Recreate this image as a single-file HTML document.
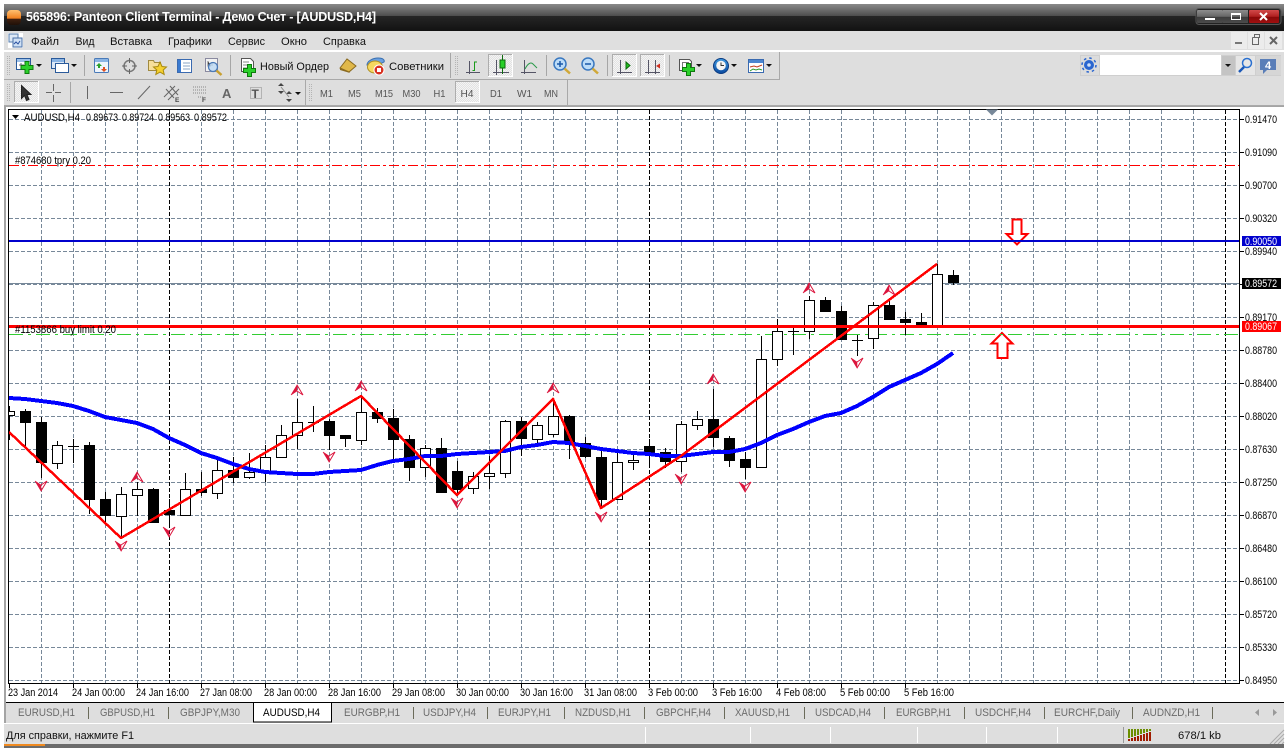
<!DOCTYPE html>
<html><head><meta charset="utf-8"><title>Panteon Client Terminal</title>
<style>
html,body{margin:0;padding:0;background:#fff;width:1288px;height:748px;overflow:hidden}
svg{display:block;position:absolute;left:0;top:0}
text{font-family:"Liberation Sans","Noto Sans CJK SC",sans-serif;font-size:11px;fill:#111}
.p text{font-size:11px;fill:#000}
.t text{font-size:11px;fill:#6b6b6b}
.m text{font-size:10.5px;fill:#555}
</style></head><body>
<svg width="1288" height="748" viewBox="0 0 1288 748" xmlns="http://www.w3.org/2000/svg">
<defs>
<linearGradient id="tb" x1="0" y1="0" x2="0" y2="1"><stop offset="0" stop-color="#8a8a8a"/><stop offset="1" stop-color="#4d4d4d"/></linearGradient>
<linearGradient id="tb2" x1="0" y1="0" x2="0" y2="1"><stop offset="0" stop-color="#262626"/><stop offset="1" stop-color="#121212"/></linearGradient>
<linearGradient id="btn" x1="0" y1="0" x2="0" y2="1"><stop offset="0" stop-color="#8d8d8d"/><stop offset=".5" stop-color="#666"/><stop offset=".55" stop-color="#3c3c3c"/><stop offset="1" stop-color="#4c4c4c"/></linearGradient>
<linearGradient id="cls" x1="0" y1="0" x2="0" y2="1"><stop offset="0" stop-color="#d24a4a"/><stop offset=".5" stop-color="#b02020"/><stop offset=".55" stop-color="#880808"/><stop offset="1" stop-color="#a01010"/></linearGradient>
<linearGradient id="org" x1="0" y1="0" x2="0" y2="1"><stop offset="0" stop-color="#ffc070"/><stop offset=".55" stop-color="#f08020"/><stop offset=".6" stop-color="#402010"/><stop offset="1" stop-color="#201008"/></linearGradient>
<linearGradient id="clk" x1="0" y1="0" x2="0" y2="1"><stop offset="0" stop-color="#3f9ae0"/><stop offset="1" stop-color="#0a4aa0"/></linearGradient>
<pattern id="chk" width="2" height="2" patternUnits="userSpaceOnUse"><rect width="2" height="2" fill="#e2e2e2"/><rect width="1" height="1" fill="#f4f4f4"/><rect x="1" y="1" width="1" height="1" fill="#f4f4f4"/></pattern>
<clipPath id="ch"><rect x="9" y="110" width="1230" height="573"/></clipPath>
<path id="u" d="M0-5L-6 5L0 1Z" fill="#dc143c" stroke="#dc143c" stroke-width=".6"/>
<path id="d" d="M0 5L-6-5L0-1Z" fill="#dc143c" stroke="#dc143c" stroke-width=".6"/>
<path id="u2" d="M0-5L6 5L0 1" fill="none" stroke="#dc143c"/>
<path id="d2" d="M0 5L6-5L0-1" fill="none" stroke="#dc143c"/>
<path id="ar" d="M0 0h6l-3 3z" fill="#111"/>
</defs>

<!-- window body -->
<rect x="4" y="4" width="1280" height="744" fill="#dedede"/>
<!-- title bar -->
<rect x="4" y="4" width="1280" height="12" fill="url(#tb)"/>
<rect x="4" y="16" width="1280" height="15" fill="url(#tb2)"/>
<rect x="7" y="10" width="14" height="15" rx="4" fill="url(#org)"/>
<text x="26" y="21" style="font-size:12.5px;font-weight:bold;fill:#fff" textLength="350" lengthAdjust="spacing">565896: Panteon Client Terminal - Демо Счет - [AUDUSD,H4]</text>
<rect x="1196" y="8.500" width="85" height="16" rx="3" fill="#222" stroke="#555"/>
<rect x="1197" y="10" width="26" height="13" rx="1" fill="url(#btn)"/>
<rect x="1223" y="10" width="25" height="13" fill="url(#btn)"/>
<rect x="1249" y="10" width="30" height="13" rx="1" fill="url(#cls)"/>
<rect x="1205" y="18" width="10" height="2" fill="#fff"/>
<rect x="1231.500" y="13.500" width="9" height="6" fill="none" stroke="#fff"/><rect x="1231" y="13" width="10" height="2" fill="#fff"/>
<path d="M1260 13l7 7M1267 13l-7 7" stroke="#fff" stroke-width="2"/>

<!-- menu -->
<rect x="4" y="31" width="1280" height="19" fill="#dfdfdf"/>
<rect x="8" y="33" width="15" height="15" fill="#fff"/>
<rect x="9" y="34" width="9" height="8" fill="#dce8f6" stroke="#5a80b0"/><rect x="13" y="38" width="9" height="9" fill="#cfe0f4" stroke="#4a70a8"/>
<path d="M14 44l2-2 2 2 2-3" stroke="#2a50a0" fill="none"/>
<g>
<text x="31" y="45" textLength="28" lengthAdjust="spacingAndGlyphs">Файл</text>
<text x="75.500" y="45" textLength="19" lengthAdjust="spacingAndGlyphs">Вид</text>
<text x="110" y="45" textLength="42" lengthAdjust="spacingAndGlyphs">Вставка</text>
<text x="168" y="45" textLength="44" lengthAdjust="spacingAndGlyphs">Графики</text>
<text x="228" y="45" textLength="37" lengthAdjust="spacingAndGlyphs">Сервис</text>
<text x="281" y="45" textLength="26" lengthAdjust="spacingAndGlyphs">Окно</text>
<text x="323" y="45" textLength="43" lengthAdjust="spacingAndGlyphs">Справка</text>
</g>
<rect x="1231" y="32" width="16" height="17" fill="#ececec"/><rect x="1248" y="32" width="16" height="17" fill="#ececec"/><rect x="1265" y="32" width="17" height="17" fill="#ececec"/>
<rect x="1235" y="42" width="7" height="2" fill="#777"/>
<path d="M1252.500 37.500h7v-3h-5v3M1252.500 37.500v7h6v-7" fill="none" stroke="#666"/>
<path d="M1270 37l7 7M1277 37l-7 7" stroke="#666" stroke-width="2"/>
<rect x="4" y="50" width="1280" height="2" fill="#fff"/>

<!-- toolbars frames -->
<path d="M4 79.500H779.500V52M4 105.500H1284M567.500 80V105M305.500 80V105" stroke="#a9a9a9" fill="none" shape-rendering="crispEdges"/>
<path d="M7.500 56V75M9.500 56V75M7.500 84V102M9.500 84V102M309.500 84V102M311.500 84V102M455.500 56V75M457.500 56V75" stroke="#b4b4b4" stroke-dasharray="1 1" shape-rendering="crispEdges"/>
<path d="M84.500 55V76M230.500 55V76M450.500 53V78M546.500 55V76M607.500 55V76M669.500 55V76M70.500 82V103" stroke="#a6a6a6" shape-rendering="crispEdges"/>

<!-- active buttons -->
<g shape-rendering="crispEdges">
<rect x="488" y="54" width="25" height="23" fill="url(#chk)"/><rect x="612" y="54" width="25" height="23" fill="url(#chk)"/><rect x="640" y="54" width="25" height="23" fill="url(#chk)"/>
<rect x="14" y="81" width="25" height="22" fill="url(#chk)"/><rect x="455" y="81" width="25" height="22" fill="url(#chk)"/>
<path fill="none" stroke="#adadad" d="M488.500 76V54.500H512M612.500 76V54.500H636M640.500 76V54.500H664M14.500 102V81.500H38M455.500 102V81.500H479"/>
<path fill="none" stroke="#fff" d="M488.500 76.500H512.500V54M612.500 76.500H636.500V54M640.500 76.500H664.500V54M14.500 102.500H38.500V81M455.500 102.500H479.500V81"/>
</g>

<!-- toolbar 1 icons -->
<g stroke-width="1">
<rect x="16.500" y="58.500" width="14" height="11" fill="#fff" stroke="#2a5a9a"/><rect x="17" y="59" width="13" height="3" fill="#9cc0e8"/>
<path d="M19 65h5M21 63v5" stroke="#667"/>
<path d="M25 61.500h4v4h4v4h-4v4h-4v-4h-4v-4h4z" fill="#2bd02b" stroke="#0d7a0d"/>
<use href="#ar" x="36" y="64"/>
<rect x="51.500" y="58.500" width="13" height="10" fill="#dce8f6" stroke="#2a5a9a"/><rect x="55.500" y="63.500" width="13" height="9" fill="#fff" stroke="#2a5a9a"/><rect x="52" y="59" width="12" height="3" fill="#8ab4e4"/>
<use href="#ar" x="71" y="64"/>
<rect x="94.500" y="58.500" width="14" height="14" rx="1" fill="#eef4fb" stroke="#4a7ab8"/><rect x="95" y="59" width="13" height="3" fill="#8ab4e4"/>
<path d="M99 63l3 3h-2v2h-2v-2h-2z" fill="#2aa02a"/><path d="M104 72l-3-3h2v-2h2v2h2z" fill="#e05020"/>
<circle cx="129.500" cy="66" r="5.500" fill="none" stroke="#777" stroke-width="1.500"/><path d="M129.500 58v5M129.500 69v5M122 66h5M132 66h5" stroke="#666"/>
<path d="M148.500 60.500h5l1 2h6v8h-12z" fill="#f6df9a" stroke="#a08a40"/>
<path d="M160 62l2 4.500 4.500.5-3.300 3 1 4.500-4.200-2.400-4.200 2.400 1-4.500-3.300-3 4.500-.5z" fill="#f5d030" stroke="#a88a10"/>
<rect x="177.500" y="59.500" width="14" height="13" fill="#fff" stroke="#3a6ab0"/><rect x="178" y="60" width="3" height="12" fill="#3a7ad0"/><path d="M183 63h7M183 66h7M183 69h7" stroke="#8aa4c4"/>
<rect x="205.500" y="58.500" width="12" height="13" fill="#f2f2f2" stroke="#8a8aa0"/><path d="M208 61v5h3M212 62v4" stroke="#777"/>
<circle cx="213" cy="67" r="4.500" fill="#bcd8f4" fill-opacity=".8" stroke="#4a7ab8" stroke-width="1.300"/><path d="M216.500 70.500l5 4.500" stroke="#c8a030" stroke-width="2.500"/>
<path d="M241.500 58.500h9l3 3v10h-12z" fill="#fff" stroke="#555"/><path d="M243 62h6M243 65h8M243 68h4" stroke="#888"/>
<path d="M247.500 64.500h4v4h4v4h-4v4h-4v-4h-4v-4h4z" fill="#2bd02b" stroke="#0d7a0d"/>
<text x="260" y="70" textLength="69" lengthAdjust="spacingAndGlyphs" style="fill:#111">Новый Ордер</text>
<path d="M340 68l7-9 9 7-7 6z" fill="#e0b84a" stroke="#8a6a20"/><path d="M340 68l9 4 1 1-10-3z" fill="#8a6a20"/>
<path d="M367 65c0-4 6-7 11-7s7 2 6 4l-6 3z" fill="#6aa0e0" stroke="#3a70b0"/>
<ellipse cx="375" cy="67" rx="7.500" ry="6" fill="#f6d860" stroke="#b09020"/>
<circle cx="379" cy="70" r="5" fill="#d83020" stroke="#fff"/><rect x="377" y="68" width="4" height="4" fill="#fff"/>
<text x="389" y="70" textLength="55" lengthAdjust="spacingAndGlyphs">Советники</text>
<g fill="none" stroke="#556" shape-rendering="crispEdges">
<path d="M469.500 61v13M466 72.500h14"/>
<path d="M472.500 70.500h2V62h2.500" stroke="#1a9a1a"/>
<path d="M496.500 60v15M493 72.500h16"/>
<path d="M524.500 60v14M521 72.500h15"/>
<path d="M620.500 60v14M617 72.500h15"/>
<path d="M648.500 60v14M655.500 60v14M645 72.500h15"/>
</g>
<path d="M525 69c3-6 6-7 8-5l4 4" stroke="#2a9a4a" fill="none"/>
<path d="M502.500 55v19" stroke="#0d6a0d" shape-rendering="crispEdges"/><rect x="500" y="60" width="5" height="8" fill="#28d028" stroke="#0d6a0d"/>
<path d="M626 62l4 3.500-4 3.500z" fill="#20c020" stroke="#0d6a0d"/>
<path d="M660 63.500l-4 2.500 4 2.500z" fill="#d03020"/>
<circle cx="560" cy="64" r="6" fill="#bcdcf8" stroke="#3a78c0" stroke-width="1.500"/><path d="M557 64h6M560 61v6" stroke="#1a58a8" stroke-width="1.500"/><path d="M564.500 68.500l5.500 5" stroke="#d0a838" stroke-width="2.500"/>
<circle cx="588" cy="64" r="6" fill="#bcdcf8" stroke="#3a78c0" stroke-width="1.500"/><path d="M585 64h6" stroke="#1a58a8" stroke-width="1.500"/><path d="M592.500 68.500l5.500 5" stroke="#d0a838" stroke-width="2.500"/>
<path d="M679.500 59.500h10l2 2v9h-12z" fill="#fff" stroke="#555"/><path d="M682.500 62.500h6v7h-6z" fill="#fff" stroke="#777"/>
<path d="M686.500 63.500h4v4h4v4h-4v4h-4v-4h-4v-4h4z" fill="#2bd02b" stroke="#0d7a0d"/>
<use href="#ar" x="696" y="64"/>
<circle cx="721" cy="66" r="7.500" fill="url(#clk)" stroke="#0a3a80"/><circle cx="721" cy="65.500" r="4.800" fill="#f4f4f4"/><path d="M721 62.500v3h3" stroke="#333" fill="none"/>
<use href="#ar" x="731" y="64"/>
<rect x="748.500" y="59.500" width="15" height="13" fill="#fff" stroke="#3a6ab0"/><rect x="749" y="60" width="14" height="3" fill="#4a86d0"/>
<path d="M750 67l4-1 3 1 5-2" stroke="#c04020" fill="none"/><path d="M750 71l3-2 3 1 3-1 3 1" stroke="#2a9a2a" fill="none"/>
<use href="#ar" x="766" y="64"/>
</g>

<!-- right toolbar -->
<rect x="1080" y="55" width="201" height="21" fill="#cfcfcf"/>
<rect x="1100" y="55" width="121" height="20" fill="#fff"/>
<rect x="1081" y="56" width="18" height="19" fill="#dcdcdc"/>
<rect x="1222" y="56" width="13" height="19" fill="#c4c4c4"/><rect x="1236" y="56" width="19" height="19" fill="#e6e6e6"/><rect x="1256" y="56" width="25" height="19" fill="#d6d6d6"/>
<circle cx="1089" cy="65" r="5" fill="#2a66d0"/><circle cx="1089" cy="65" r="7" fill="none" stroke="#2a66d0" stroke-width="1.500" stroke-dasharray="2.500 3"/><circle cx="1089" cy="65" r="1.800" fill="#cfe0f8"/>
<use href="#ar" x="1225" y="64"/>
<circle cx="1247" cy="63" r="4.500" fill="none" stroke="#2a70d0" stroke-width="1.500"/><path d="M1244 67l-5 5" stroke="#1a58b8" stroke-width="2.500"/>
<rect x="1260" y="59" width="16" height="11" fill="#5a7eb8"/><path d="M1263 70v4l4-4z" fill="#5a7eb8"/>
<text x="1265" y="69" style="font-size:11px;font-weight:bold;fill:#fff">4</text>

<!-- toolbar 2 -->
<path d="M21.500 85.500v13l3-3 2 5 2.500-1-2-5h4z" fill="#333" stroke="#222"/>
<path d="M53.500 84v7M53.500 95v7M46 92.500h6M55 92.500h6" stroke="#666" shape-rendering="crispEdges"/>
<path d="M87.500 86v13M110 92.500h13" stroke="#666" shape-rendering="crispEdges"/>
<path d="M138 99l12-13" stroke="#666"/>
<path d="M164 97l11-11M168 100l11-11M166 89l8 9M170 86l8 9" stroke="#666" fill="none"/>
<text x="175" y="102" style="font-size:6.500px;font-weight:bold;fill:#444">E</text>
<path d="M193 87h14M193 90h14M193 93h14" stroke="#888" stroke-dasharray="1 1" shape-rendering="crispEdges"/>
<path d="M198 97h6" stroke="#888" stroke-dasharray="1 1"/>
<text x="202" y="102" style="font-size:6.500px;font-weight:bold;fill:#444">F</text>
<text x="222" y="98" style="font-size:13px;font-weight:bold;fill:#666">A</text>
<rect x="250.500" y="87.500" width="11" height="11" fill="none" stroke="#888" stroke-dasharray="1 1"/>
<text x="251.500" y="98" style="font-size:12px;font-weight:bold;fill:#555">T</text>
<path d="M278 87l3-3 3 3zM278 92h6l-3 3zM286 95l3-3 3 3zM286 100h6l-3 3z" transform="translate(0,-1)" fill="#444"/>
<path d="M281 87l8 10" stroke="#888"/>
<use href="#ar" x="295" y="92"/>
<g class="m">
<text x="320" y="97" textLength="13" lengthAdjust="spacingAndGlyphs">M1</text>
<text x="348" y="97" textLength="13" lengthAdjust="spacingAndGlyphs">M5</text>
<text x="375" y="97" textLength="18" lengthAdjust="spacingAndGlyphs">M15</text>
<text x="402.500" y="97" textLength="18" lengthAdjust="spacingAndGlyphs">M30</text>
<text x="433.500" y="97" textLength="12" lengthAdjust="spacingAndGlyphs">H1</text>
<text x="460.500" y="97" textLength="13" lengthAdjust="spacingAndGlyphs">H4</text>
<text x="490" y="97" textLength="12" lengthAdjust="spacingAndGlyphs">D1</text>
<text x="517" y="97" textLength="15" lengthAdjust="spacingAndGlyphs">W1</text>
<text x="544" y="97" textLength="14" lengthAdjust="spacingAndGlyphs">MN</text>
</g>

<!-- chart area -->
<rect x="4" y="106" width="1280" height="597" fill="#fff"/>
<rect x="4" y="106" width="2" height="617" fill="#a4a4a4"/>
<rect x="6" y="106" width="1278" height="1" fill="#a4a4a4"/>
<rect x="8.500" y="109.500" width="1231" height="574" fill="#fff" stroke="#000" shape-rendering="crispEdges"/>
<g clip-path="url(#ch)" shape-rendering="crispEdges">
<path stroke="#778899" stroke-dasharray="4 2" fill="none" d="M41.500 110V683M73.500 110V683M105.500 110V683M137.500 110V683M201.500 110V683M233.500 110V683M265.500 110V683M297.500 110V683M329.500 110V683M361.500 110V683M393.500 110V683M425.500 110V683M457.500 110V683M489.500 110V683M521.500 110V683M553.500 110V683M585.500 110V683M617.500 110V683M681.500 110V683M713.500 110V683M745.500 110V683M777.500 110V683M809.500 110V683M841.500 110V683M873.500 110V683M905.500 110V683M937.500 110V683M969.500 110V683M1001.500 110V683M1033.500 110V683M1065.500 110V683M1097.500 110V683M1129.500 110V683M1161.500 110V683M1193.500 110V683M9 119.500H1239M9 152.500H1239M9 185.500H1239M9 218.500H1239M9 251.500H1239M9 284.500H1239M9 317.500H1239M9 350.500H1239M9 383.500H1239M9 416.500H1239M9 449.500H1239M9 482.500H1239M9 515.500H1239M9 548.500H1239M9 581.500H1239M9 614.500H1239M9 647.500H1239M9 680.500H1239"/>
<path stroke="#000" stroke-dasharray="4 2" d="M169.500 110V683M649.500 110V683M1225.500 110V683"/>
<path stroke="#ff0000" stroke-dasharray="10 3 3 3" d="M9 165.500H1239"/>
<path d="M1012.500 219.500h9v14.500h6l-10.500 10.500-10.500-10.500h6z" fill="#fff" stroke="#ff0000" stroke-width="2" shape-rendering="auto"/>
<path d="M1002 333l10.500 10.500h-5v14.500h-10v-14.500h-6z" fill="#fff" stroke="#ff0000" stroke-width="2" shape-rendering="auto"/>
<path stroke="#778899" d="M9 283.500H1239"/>
<rect x="9" y="240" width="1230" height="2" fill="#0000cd"/>
<path stroke="#32cd32" stroke-dasharray="14 5 3 5" d="M9 334.500H1239"/>
<!-- wicks -->
<path stroke="#000" fill="none" d="M9.500 406V440M25.500 409V447M41.500 417V478M57.500 441V469M73.500 439V463M89.500 442V514M105.500 492V524M121.500 487V537M137.500 482V516M153.500 488V523M169.500 499V527M185.500 473V515M201.500 472V496M217.500 457V499M233.500 457V483M249.500 453V479M265.500 445V482M281.500 425V457M297.500 399V449M313.500 406V432M329.500 419V450M345.500 435V447M361.500 396V445M377.500 408V423M393.500 409V460M409.500 435V481M425.500 445V477M441.500 438V493M457.500 461V495M473.500 472V494M489.500 456V489M505.500 420V478M521.500 417V456M537.500 422V445M553.500 399V437M569.500 415V459M585.500 437V458M601.500 450V508M617.500 453V499M633.500 454V470M649.500 439V466M665.500 448V468M681.500 421V472M697.500 411V430M713.500 389V447M729.500 436V467M745.500 452V479M761.500 336V467M777.500 319V366M793.500 327V355M809.500 296V339M825.500 297V312M841.500 306V340M857.500 335V356M873.500 302V349M889.500 298V320M905.500 312V335M921.500 313V325M937.500 264V325M953.500 270V285M68 446.500H79M308 422.500H319M788 331.500H799M852 340.500H863"/>
<!-- black bodies -->
<path fill="#000" d="M20 411h11v12h-11zM36 422h11v41h-11zM84 445h11v55h-11zM100 499h11v17h-11zM148 489h11v34h-11zM164 510h11v5h-11zM196 489h11v4h-11zM228 470h11v8h-11zM324 421h11v15h-11zM340 435h11v4h-11zM372 412h11v7h-11zM388 418h11v22h-11zM404 439h11v29h-11zM436 448h11v45h-11zM452 471h11v19h-11zM516 421h11v18h-11zM564 416h11v26h-11zM580 443h11v14h-11zM596 457h11v43h-11zM644 446h11v7h-11zM660 452h11v10h-11zM708 419h11v19h-11zM724 438h11v23h-11zM740 459h11v9h-11zM820 300h11v12h-11zM836 311h11v29h-11zM884 305h11v15h-11zM900 319h11v4h-11zM916 322h11v3h-11zM948 275h11v8h-11z"/>
<!-- white bodies -->
<path fill="#fff" stroke="#000" d="M4.500 411.500h10v4h-10zM52.500 445.500h10v18h-10zM116.500 494.500h10v22h-10zM132.500 489.500h10v6h-10zM180.500 489.500h10v26h-10zM212.500 470.500h10v23h-10zM244.500 472.500h10v5h-10zM260.500 457.500h10v15h-10zM276.500 435.500h10v22h-10zM292.500 422.500h10v13h-10zM356.500 412.500h10v28h-10zM420.500 448.500h10v19h-10zM468.500 476.500h10v12h-10zM484.500 473.500h10v3h-10zM500.500 421.500h10v52h-10zM532.500 425.500h10v14h-10zM548.500 416.500h10v18h-10zM612.500 462.500h10v37h-10zM628.500 460.500h10v2h-10zM676.500 424.500h10v37h-10zM692.500 419.500h10v6h-10zM756.500 359.500h10v108h-10zM772.500 331.500h10v28h-10zM804.500 300.500h10v31h-10zM868.500 305.500h10v33h-10zM932.500 274.500h10v51h-10z"/>
<!-- MA -->
<polyline fill="none" stroke="#0000ff" stroke-width="4" stroke-linejoin="round" points="9,398 25,399 41,401 57,403 73,406 89,411 105,417 121,420 137,423 153,429 169,438 185,445 201,453 217,458 233,464 249,469 265,472 281,473 297,474 313,474 329,472 345,471 361,470 377,465 393,461 409,459 425,456 441,456 457,454 473,453 489,452 505,451 521,447 537,445 553,442 569,443 585,446 601,449 617,451 633,453 649,454 665,456 681,456 697,454 713,452 729,452 745,449 761,443 777,435 793,429 809,422 825,416 841,413 857,406 873,397 889,387 905,380 921,373 937,364 953,353"/>
<!-- zigzag -->
<polyline fill="none" stroke="#ff0000" stroke-width="2.500" stroke-linejoin="round" points="9,432 121,538 361,396 457,495 553,399 601,508 681,456 937,264"/>
<rect x="9" y="325" width="1230" height="3" fill="#ff0000"/>
</g>
<!-- fractal arrows -->
<g>
<use href="#d" x="41" y="486"/><use href="#d2" x="41" y="486"/>
<use href="#u" x="137" y="477"/><use href="#u2" x="137" y="477"/>
<use href="#d" x="121" y="546"/><use href="#d2" x="121" y="546"/>
<use href="#d" x="169" y="532"/><use href="#d2" x="169" y="532"/>
<use href="#u" x="297" y="390"/><use href="#u2" x="297" y="390"/>
<use href="#d" x="329" y="457"/><use href="#d2" x="329" y="457"/>
<use href="#u" x="361" y="386"/><use href="#u2" x="361" y="386"/>
<use href="#d" x="457" y="503"/><use href="#d2" x="457" y="503"/>
<use href="#u" x="553" y="388"/><use href="#u2" x="553" y="388"/>
<use href="#d" x="601" y="517"/><use href="#d2" x="601" y="517"/>
<use href="#d" x="681" y="479"/><use href="#d2" x="681" y="479"/>
<use href="#u" x="713" y="379"/><use href="#u2" x="713" y="379"/>
<use href="#d" x="745" y="487"/><use href="#d2" x="745" y="487"/>
<use href="#d" x="857" y="363"/><use href="#d2" x="857" y="363"/>
<use href="#u" x="809" y="288"/><use href="#u2" x="809" y="288"/>
<use href="#u" x="889" y="290"/><use href="#u2" x="889" y="290"/>
</g>
<!-- chart texts -->
<path d="M12 115h7l-3.500 4z" fill="#000"/>
<path d="M986 109.500h12l-6 6z" fill="#778899"/>
<g class="p">
<text x="24" y="121" textLength="56" lengthAdjust="spacingAndGlyphs">AUDUSD,H4</text>
<text x="86" y="121" textLength="32" lengthAdjust="spacingAndGlyphs">0.89673</text>
<text x="122" y="121" textLength="32" lengthAdjust="spacingAndGlyphs">0.89724</text>
<text x="158" y="121" textLength="32" lengthAdjust="spacingAndGlyphs">0.89563</text>
<text x="194" y="121" textLength="33" lengthAdjust="spacingAndGlyphs">0.89572</text>
<text x="15" y="164" textLength="76" lengthAdjust="spacingAndGlyphs">#874680 tpry 0.20</text>
<text x="15" y="333" textLength="101" lengthAdjust="spacingAndGlyphs">#1153866 buy limit 0.20</text>
</g>
<!-- y axis -->
<path stroke="#000" d="M1240 119.500h4M1240 152.500h4M1240 185.500h4M1240 218.500h4M1240 251.500h4M1240 284.500h4M1240 317.500h4M1240 350.500h4M1240 383.500h4M1240 416.500h4M1240 449.500h4M1240 482.500h4M1240 515.500h4M1240 548.500h4M1240 581.500h4M1240 614.500h4M1240 647.500h4M1240 680.500h4" shape-rendering="crispEdges"/>
<g class="p">
<text x="1245" y="123" textLength="32" lengthAdjust="spacingAndGlyphs">0.91470</text>
<text x="1245" y="156" textLength="32" lengthAdjust="spacingAndGlyphs">0.91090</text>
<text x="1245" y="189" textLength="32" lengthAdjust="spacingAndGlyphs">0.90700</text>
<text x="1245" y="222" textLength="32" lengthAdjust="spacingAndGlyphs">0.90320</text>
<text x="1245" y="255" textLength="32" lengthAdjust="spacingAndGlyphs">0.89940</text>
<text x="1245" y="321" textLength="32" lengthAdjust="spacingAndGlyphs">0.89170</text>
<text x="1245" y="354" textLength="32" lengthAdjust="spacingAndGlyphs">0.88780</text>
<text x="1245" y="387" textLength="32" lengthAdjust="spacingAndGlyphs">0.88400</text>
<text x="1245" y="420" textLength="32" lengthAdjust="spacingAndGlyphs">0.88020</text>
<text x="1245" y="453" textLength="32" lengthAdjust="spacingAndGlyphs">0.87630</text>
<text x="1245" y="486" textLength="32" lengthAdjust="spacingAndGlyphs">0.87250</text>
<text x="1245" y="519" textLength="32" lengthAdjust="spacingAndGlyphs">0.86870</text>
<text x="1245" y="552" textLength="32" lengthAdjust="spacingAndGlyphs">0.86480</text>
<text x="1245" y="585" textLength="32" lengthAdjust="spacingAndGlyphs">0.86100</text>
<text x="1245" y="618" textLength="32" lengthAdjust="spacingAndGlyphs">0.85720</text>
<text x="1245" y="651" textLength="32" lengthAdjust="spacingAndGlyphs">0.85330</text>
<text x="1245" y="684" textLength="32" lengthAdjust="spacingAndGlyphs">0.84950</text>
</g>
<rect x="1242" y="236" width="39" height="10" fill="#0000cd"/>
<text x="1245" y="245" textLength="32" lengthAdjust="spacingAndGlyphs" style="fill:#fff">0.90050</text>
<rect x="1242" y="278" width="39" height="11" fill="#000"/>
<text x="1245" y="287" textLength="32" lengthAdjust="spacingAndGlyphs" style="fill:#fff">0.89572</text>
<rect x="1242" y="321" width="39" height="11" fill="#ff0000"/>
<text x="1245" y="330" textLength="32" lengthAdjust="spacingAndGlyphs" style="fill:#fff">0.89067</text>
<!-- x axis -->
<path stroke="#000" d="M9.500 684v4M73.500 684v4M137.500 684v4M201.500 684v4M265.500 684v4M329.500 684v4M393.500 684v4M457.500 684v4M521.500 684v4M585.500 684v4M649.500 684v4M713.500 684v4M777.500 684v4M841.500 684v4M905.500 684v4" shape-rendering="crispEdges"/>
<g class="p">
<text x="8" y="696" textLength="50" lengthAdjust="spacingAndGlyphs">23 Jan 2014</text>
<text x="72" y="696" textLength="53" lengthAdjust="spacingAndGlyphs">24 Jan 00:00</text>
<text x="136" y="696" textLength="53" lengthAdjust="spacingAndGlyphs">24 Jan 16:00</text>
<text x="200" y="696" textLength="52" lengthAdjust="spacingAndGlyphs">27 Jan 08:00</text>
<text x="264" y="696" textLength="53" lengthAdjust="spacingAndGlyphs">28 Jan 00:00</text>
<text x="328" y="696" textLength="53" lengthAdjust="spacingAndGlyphs">28 Jan 16:00</text>
<text x="392" y="696" textLength="53" lengthAdjust="spacingAndGlyphs">29 Jan 08:00</text>
<text x="456" y="696" textLength="53" lengthAdjust="spacingAndGlyphs">30 Jan 00:00</text>
<text x="520" y="696" textLength="53" lengthAdjust="spacingAndGlyphs">30 Jan 16:00</text>
<text x="584" y="696" textLength="53" lengthAdjust="spacingAndGlyphs">31 Jan 08:00</text>
<text x="648" y="696" textLength="50" lengthAdjust="spacingAndGlyphs">3 Feb 00:00</text>
<text x="712" y="696" textLength="50" lengthAdjust="spacingAndGlyphs">3 Feb 16:00</text>
<text x="776" y="696" textLength="50" lengthAdjust="spacingAndGlyphs">4 Feb 08:00</text>
<text x="840" y="696" textLength="50" lengthAdjust="spacingAndGlyphs">5 Feb 00:00</text>
<text x="904" y="696" textLength="50" lengthAdjust="spacingAndGlyphs">5 Feb 16:00</text>
</g>

<!-- tabs -->
<rect x="6" y="703" width="1278" height="20" fill="#dedede"/>
<rect x="6" y="702" width="1278" height="1" fill="#000"/>
<rect x="253" y="703" width="78" height="19" fill="#fff"/>
<path d="M253.500 703v19h78v-19" fill="none" stroke="#000" shape-rendering="crispEdges"/>
<path stroke="#6b6b5a" d="M88.500 707v12M168.500 707v12M413.500 707v12M487.500 707v12M564.500 707v12M644.500 707v12M724.500 707v12M804.500 707v12M884.500 707v12M964.500 707v12M1044.500 707v12M1132.500 707v12M1212.500 707v12" shape-rendering="crispEdges"/>
<g class="t">
<text x="18" y="716" textLength="57" lengthAdjust="spacingAndGlyphs">EURUSD,H1</text>
<text x="100" y="716" textLength="55" lengthAdjust="spacingAndGlyphs">GBPUSD,H1</text>
<text x="180" y="716" textLength="60" lengthAdjust="spacingAndGlyphs">GBPJPY,M30</text>
<text x="263" y="716" textLength="57" lengthAdjust="spacingAndGlyphs" style="fill:#000">AUDUSD,H4</text>
<text x="344" y="716" textLength="56" lengthAdjust="spacingAndGlyphs">EURGBP,H1</text>
<text x="423" y="716" textLength="53" lengthAdjust="spacingAndGlyphs">USDJPY,H4</text>
<text x="498" y="716" textLength="53" lengthAdjust="spacingAndGlyphs">EURJPY,H1</text>
<text x="575" y="716" textLength="56" lengthAdjust="spacingAndGlyphs">NZDUSD,H1</text>
<text x="656" y="716" textLength="55" lengthAdjust="spacingAndGlyphs">GBPCHF,H4</text>
<text x="735" y="716" textLength="55" lengthAdjust="spacingAndGlyphs">XAUUSD,H1</text>
<text x="815" y="716" textLength="56" lengthAdjust="spacingAndGlyphs">USDCAD,H4</text>
<text x="896" y="716" textLength="55" lengthAdjust="spacingAndGlyphs">EURGBP,H1</text>
<text x="975" y="716" textLength="56" lengthAdjust="spacingAndGlyphs">USDCHF,H4</text>
<text x="1054" y="716" textLength="66" lengthAdjust="spacingAndGlyphs">EURCHF,Daily</text>
<text x="1143" y="716" textLength="57" lengthAdjust="spacingAndGlyphs">AUDNZD,H1</text>
</g>
<path d="M1259 709v7l-4-3.500zM1273 709v7l4-3.500z" fill="#999"/>

<!-- status bar -->
<rect x="4" y="723" width="1280" height="1" fill="#fff"/>
<rect x="4" y="724" width="1280" height="20" fill="#dedede"/>
<text x="6" y="739" textLength="128" lengthAdjust="spacingAndGlyphs">Для справки, нажмите F1</text>
<path stroke="#fff" d="M645.500 727v16M750.500 727v16M830.500 727v16M917.500 727v16M986.500 727v16M1057.500 727v16" shape-rendering="crispEdges"/>
<path stroke="#999" d="M1123.500 727v16" shape-rendering="crispEdges"/>
<g shape-rendering="crispEdges">
<path fill="#6b8e00" d="M1128 729h2v9h-2zM1131 729h2v8h-2zM1134 729h2v7h-2zM1137 729h2v6h-2zM1140 729h2v5h-2zM1143 729h2v4h-2zM1146 729h2v3h-2zM1149 729h2v2h-2z"/>
<path fill="#a01c00" d="M1128 739h2v2h-2zM1131 738h2v3h-2zM1134 737h2v4h-2zM1137 736h2v5h-2zM1140 735h2v6h-2zM1143 734h2v7h-2zM1146 733h2v8h-2zM1149 732h2v9h-2z"/>
</g>
<text x="1178" y="739" textLength="43" lengthAdjust="spacingAndGlyphs">678/1 kb</text>
<path stroke="#aaa" fill="none" d="M1270 744l14-14M1274 744l10-10M1278 744l6-6M1282 744l2-2"/>
<rect x="4" y="744" width="1280" height="4" fill="#6c6c6c"/>
<rect x="4" y="744" width="41" height="2" fill="#f08a20"/>
</svg>
</body></html>
